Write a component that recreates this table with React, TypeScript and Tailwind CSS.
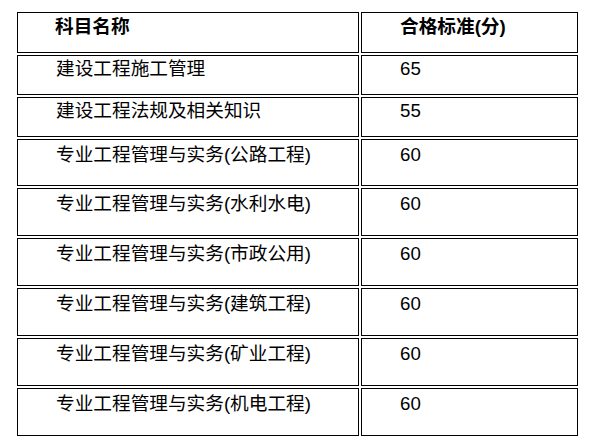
const ROWS: { name: string; score: string; tall?: boolean }[] = [
  { name: "建设工程施工管理", score: "65" },
  { name: "建设工程法规及相关知识", score: "55" },
  { name: "专业工程管理与实务(公路工程)", score: "60", tall: true },
  { name: "专业工程管理与实务(水利水电)", score: "60", tall: true },
  { name: "专业工程管理与实务(市政公用)", score: "60", tall: true },
  { name: "专业工程管理与实务(建筑工程)", score: "60", tall: true },
  { name: "专业工程管理与实务(矿业工程)", score: "60", tall: true },
  { name: "专业工程管理与实务(机电工程)", score: "60", tall: true },
];

const cell = "border border-black align-top p-0";

export default function App() {
  return (
    <div
      className="min-h-screen bg-white text-black"
      style={{ fontFamily: '"Liberation Sans", Arial, "Noto Sans CJK SC", sans-serif' }}
    >
      <div className="pl-[15px] pt-[10px]">
        <table className="border-separate border-spacing-[2px] text-[18.67px] leading-[22px]">
          <tbody>
            <tr className="h-[41px]">
              <td className={`${cell} w-[342px] pl-[37px] pt-[3px] font-bold`}>科目名称</td>
              <td className={`${cell} w-[217px] pl-[38px] pt-[3px] font-bold`}>合格标准(分)</td>
            </tr>
            {ROWS.map((r, i) => (
              <tr key={r.name} className={r.tall ? (i === 2 ? "h-[47px]" : "h-[48px]") : "h-[40px]"}>
                <td className={`${cell} pl-[38px] ${r.tall ? "pt-[4px]" : "pt-[2px]"}`}>{r.name}</td>
                <td className={`${cell} pl-[38px] ${r.tall ? "pt-[4px]" : "pt-[2px]"}`}>{r.score}</td>
              </tr>
            ))}
          </tbody>
        </table>
        <p className="mt-[4px] pl-[40px] text-[16px] leading-[20px]">注：以上为各科目合格标准</p>
      </div>
    </div>
  );
}
